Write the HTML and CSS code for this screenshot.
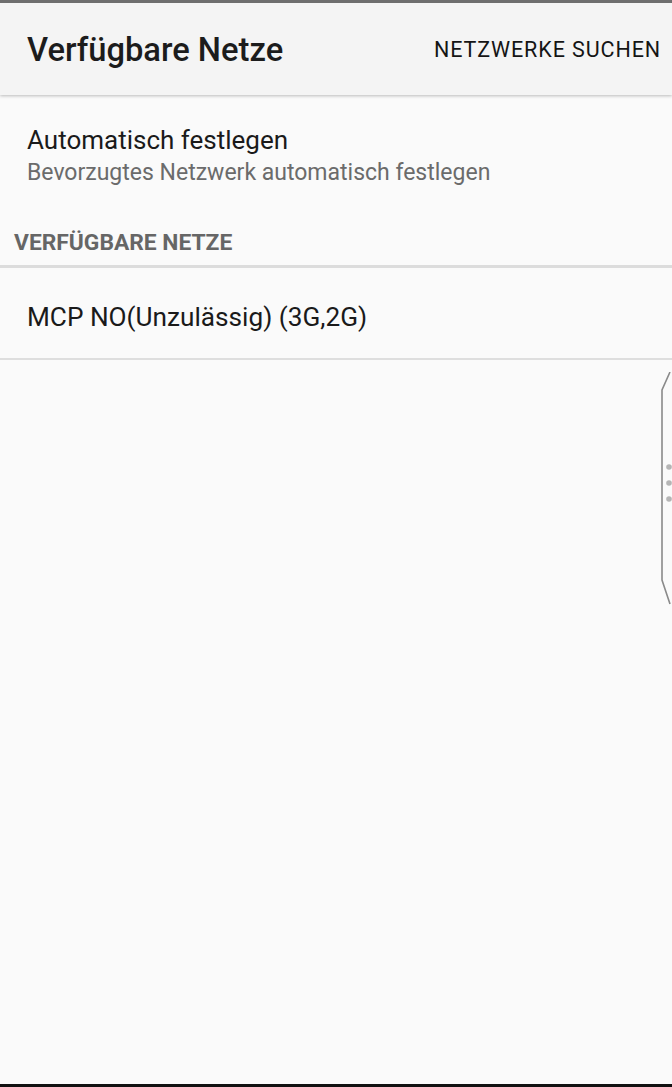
FILE: index.html
```html
<!DOCTYPE html>
<html lang="de">
<head>
<meta charset="utf-8">
<link rel="stylesheet" href="styles.css">
</head>
<body>
<div class="screen">
  <header class="appbar">
    <h1 class="title">Verfügbare Netze</h1>
    <span class="action">NETZWERKE SUCHEN</span>
  </header>
  <div class="item auto">
    <div class="item-title">Automatisch festlegen</div>
    <div class="item-sub">Bevorzugtes Netzwerk automatisch festlegen</div>
  </div>
  <div class="section">VERFÜGBARE NETZE</div>
  <div class="item net">
    <div class="item-title">MCP NO(Unzulässig) (3G,2G)</div>
  </div>
  <div class="filler"></div>
  <svg class="edge-handle" width="14" height="236" viewBox="0 0 14 236">
    <polyline points="10,0 2,18 2,208 10,232" fill="none" stroke="#8a8a8a" stroke-width="1.6"/>
    <circle cx="9" cy="95" r="2.8" fill="#b5b5b5"/>
    <circle cx="9" cy="111" r="2.8" fill="#b5b5b5"/>
    <circle cx="9" cy="127" r="2.8" fill="#b5b5b5"/>
  </svg>
</div>
</body>
</html>
```

FILE: styles.css
```css
html, body {
  margin: 0;
  padding: 0;
  background: #fafafa;
}
body {
  font-family: Roboto, "Noto Sans", sans-serif;
}
.screen {
  position: relative;
  width: 672px;
  height: 1087px;
  display: flex;
  flex-direction: column;
  background: #fafafa;
  border-top: 3px solid #6e6e6e;
  border-bottom: 3px solid #111;
  box-sizing: border-box;
  overflow: hidden;
}
.appbar {
  height: 92px;
  flex: none;
  display: flex;
  align-items: center;
  justify-content: space-between;
  padding: 2px 11px 0 27px;
  box-sizing: border-box;
  background: #f4f4f4;
  box-shadow: 0 1px 3px rgba(0,0,0,0.25);
  position: relative;
  z-index: 1;
}
.title {
  margin: 0;
  font-size: 32.7px;
  font-weight: 500;
  color: #1c1c1c;
  letter-spacing: 0;
  line-height: 40px;
}
.action {
  font-size: 21.5px;
  font-weight: 400;
  color: #151515;
  letter-spacing: 0.9px;
  line-height: 30px;
}
.item {
  padding: 0 27px;
  display: flex;
  flex-direction: column;
  box-sizing: border-box;
  flex: none;
}
.auto {
  height: 125px;
  padding-top: 29px;
}
.item-title {
  font-size: 26px;
  line-height: 32px;
  color: #1a1a1a;
}
.net .item-title {
  font-size: 26.2px;
}
.item-sub {
  font-size: 23px;
  line-height: 30px;
  color: #6b6b6b;
  margin-top: 2px;
}
.section {
  flex: none;
  padding: 0 14px;
  font-size: 22.8px;
  font-weight: 700;
  color: #666;
  height: 48px;
  display: flex;
  align-items: center;
  border-bottom: 3px solid #dcdcdc;
  box-sizing: border-box;
}
.net {
  height: 92px;
  padding-top: 8px;
  justify-content: center;
  border-bottom: 2px solid #dedede;
}
.filler {
  flex: 1;
}
.edge-handle {
  position: absolute;
  right: -2px;
  top: 369px;
}
```
